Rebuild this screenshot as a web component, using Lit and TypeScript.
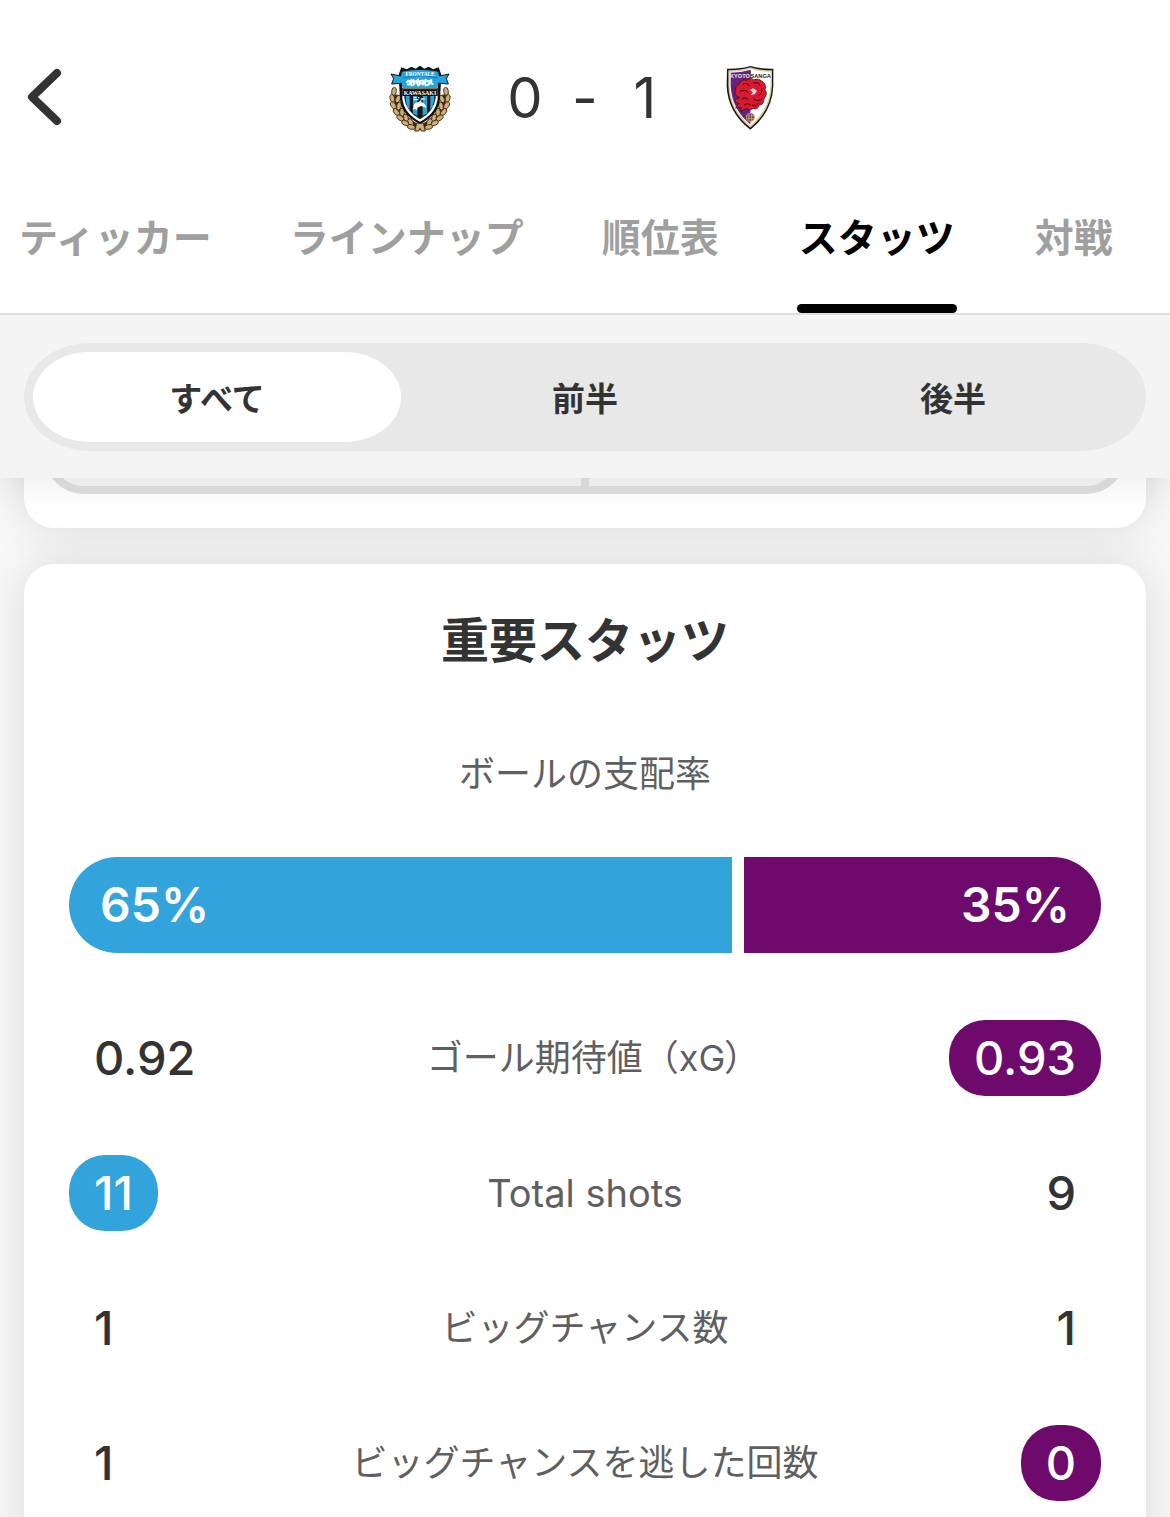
import { LitElement, html, svg, css } from "lit";
import { customElement, property, state } from "lit/decorators.js";
import { classMap } from "lit/directives/class-map.js";
import { styleMap } from "lit/directives/style-map.js";

type Side = "home" | "away";

interface Stat {
  label: string;
  home: string;
  away: string;
  lead?: Side;
}

const TABS = ["ティッカー", "ラインナップ", "順位表", "スタッツ", "対戦"];
const PERIODS = ["すべて", "前半", "後半"];
const POSSESSION = { home: 65, away: 35 };
const STATS: Stat[] = [
  { label: "ゴール期待値（xG）", home: "0.92", away: "0.93", lead: "away" },
  { label: "Total shots", home: "11", away: "9", lead: "home" },
  { label: "ビッグチャンス数", home: "1", away: "1" },
  { label: "ビッグチャンスを逃した回数", home: "1", away: "0", lead: "away" },
];

/* Laurel leaves of the left branch: x, y, rotation. The right branch mirrors them. */
const LEAVES: [number, number, number][] = [
  [42, 110, 8], [37, 131, -14], [54, 133, 26], [40, 152, -30], [57, 154, 12],
  [49, 172, -42], [66, 173, 0], [61, 190, -54], [78, 190, -14],
  [76, 205, -64], [92, 203, -28], [94, 217, -76],
];

@customElement("home-crest")
export class HomeCrest extends LitElement {
  static styles = css`
    :host { display: block; }
    .crest { display: block; width: 62px; height: 67px; }
    .name { font-family: "Liberation Serif", serif; font-weight: 700; }
  `;

  private branch() {
    return LEAVES.map(
      ([x, y, r]) => svg`<ellipse cx=${x} cy=${y} rx="7" ry="12" transform="rotate(${r} ${x} ${y})"
        fill="#cfae78" stroke="#3a2815" stroke-width="2.5"></ellipse>`
    );
  }

  render() {
    return html`
      <svg class="crest" viewBox="27 31 186 201" role="img" aria-label="Kawasaki Frontale">
        <path d="M46 120 Q52 190 120 218 Q188 190 194 120" fill="none" stroke="#3a2815" stroke-width="14" />
        ${this.branch()}
        <g transform="translate(240 0) scale(-1 1)">${this.branch()}</g>
        <path d="M110 205 h20 l6 24 h-12 l-4 -8 l-4 8 h-12z" fill="#cfae78" stroke="#3a2815" stroke-width="3" />
        <path d="M64 38 L80 44 L94 36 L107 42 L120 33 L133 42 L146 36 L160 44 L176 38 L184 60 L180 135 Q174 182 120 208 Q66 182 60 135 L56 60z" fill="#111" />
        <path d="M67 74 H173 V132 Q168 176 120 201 Q72 176 67 132z" fill="#fff" />
        <path d="M73 76 H167 V130 Q162 170 120 194 Q78 170 73 130z" fill="#1a1a1a" />
        <path d="M77 124h12v42l-6-8q-6-14-6-34zM99 124h13v60l-13-8zM128 124h13v52l-13 8zM151 124h12q0 20-6 34l-6 8z" fill="#23a6e0" />
        <path d="M101 129 h8 M114 129 h4 M122 133 h12 M101 135 h14" stroke="#d7f0fa" stroke-width="4" />
        <path d="M100 156 q2 -12 16 -14 l8 -7 l0 8 q14 4 15 18 q-8 -7 -17 -6 q-10 2 -12 12 l-5 -5 l-8 3 l5 -9z" fill="#fff" />
        <path d="M33 58 L62 64 L64 50 Q120 38 176 50 L178 64 L207 58 L199 72 L205 88 L180 86 Q120 74 60 86 L35 88 L41 72z" fill="#23a6e0" stroke="#111" stroke-width="3" />
        <path d="M64 72 Q120 56 176 72 L172 101 H68z" fill="#23a6e0" />
        <path d="M68 70 Q120 56 172 70" fill="none" stroke="#111" stroke-width="1" />
        <path d="M81 82 q6 -8 8 2 q0 8 -6 5 M94 76 v16 M90 82 q8 -2 15 0 M100 76 q8 6 0 15 M108 80 h12 M114 74 q-7 10 1 18 q8 -4 0 -12 M124 78 q10 -3 4 12 M122 86 h12 M137 75 q-4 12 0 17 M142 80 q9 -5 7 4 q-1 8 -9 7 M154 76 q-2 12 4 12" fill="none" stroke="#fff" stroke-width="6" stroke-linecap="round" />
        <path d="M67 100 H173 V124 H67z" fill="#111" />
        <path d="M69 102 H171" stroke="#d9c79c" stroke-width="2" />
        <text class="name" x="120" y="63" text-anchor="middle" font-size="16" fill="#fff">FRONTALE</text>
        <text class="name" x="120" y="122" text-anchor="middle" font-size="18" fill="#fff">KAWASAKI</text>
      </svg>
    `;
  }
}

@customElement("away-crest")
export class AwayCrest extends LitElement {
  static styles = css`
    :host { display: block; }
    .crest { display: block; width: 48px; height: 65px; }
    .name { font-family: "Liberation Sans", sans-serif; font-weight: 700; }
  `;

  render() {
    return html`
      <svg class="crest" viewBox="33 31 144 195" role="img" aria-label="Kyoto Sanga">
        <path d="M36 39 Q76 40 106 31 Q136 40 175 39 V90 Q172 170 106 222 Q38 170 35 90z" fill="#151515" />
        <path d="M40 44 Q76 44 106 35 Q136 44 171 44 V90 Q168 166 106 216 Q42 166 40 90z" fill="#d8c79a" />
        <path d="M44 48 Q78 48 106 39 Q134 48 167 48 V90 Q163 163 106 210 Q47 163 44 90z" fill="#fff" />
        <path d="M47 51 Q78 51 106 42 V206 Q50 160 47 90z" fill="#67227b" />
        <path d="M106 44 v24" stroke="#151515" stroke-width="2" />
        <path d="M72 86 Q78 68 96 74 Q106 62 116 72 Q132 66 143 78 Q157 90 150 102 Q160 116 147 130 Q148 146 132 149 Q128 164 114 158 Q104 168 96 158 L76 168 L80 155 L62 157 L72 143 Q54 140 62 130 L74 126 Q54 118 62 104 Q60 90 72 86z" fill="#d8192f" stroke="#281016" stroke-width="2" />
        <path d="M84 86 q12 -8 18 4 M76 106 q14 -6 22 4 M81 130 q12 -8 18 2 M88 148 q10 -9 18 0 M116 82 q14 -5 20 8 M140 100 q4 12 -8 18 M116 130 q12 10 24 0 M112 148 q12 6 18 -4" fill="none" stroke="#281016" stroke-width="3" stroke-linecap="round" />
        <path d="M104 103 l10 -5 l12 7 l-7 11 l-12 2 l7 -8z" fill="#f3d9d9" />
        <circle cx="106" cy="185" r="12" fill="#67227b" stroke="#c5a052" stroke-width="3" />
        <path d="M94 181 h24 M94 189 h24 M102 174 v22 M110 174 v22" stroke="#c5a052" stroke-width="3" />
        <text class="name" x="75" y="66" text-anchor="middle" font-size="17" fill="#f1e5ee">KYOTO</text>
        <text class="name" x="137" y="66" text-anchor="middle" font-size="17" fill="#2a2024">SANGA</text>
      </svg>
    `;
  }
}

@customElement("stat-table")
export class StatTable extends LitElement {
  @property({ attribute: false }) stats: Stat[] = [];

  static styles = css`
    :host { display: block; }
    .table { width: 100%; border-collapse: collapse; table-layout: fixed; }
    .cell { padding: 30px 0 29px; width: 22%; font-weight: 500; }
    .home-cell { text-align: left; }
    .away-cell { text-align: right; }
    .label {
      padding: 0; font-size: 36px; line-height: 48px; font-weight: 400; color: #5f5f5f;
      text-align: center; white-space: nowrap;
    }
    .label.latin { font-size: 38px; }
    .value {
      display: inline-block; vertical-align: top; padding: 0 25px; border-radius: 36px;
      font-size: 47px; line-height: 76px; color: #333;
    }
    .home-lead { background: #33a3dc; color: #fff; }
    .away-lead { background: #6e0a6b; color: #fff; }
    .trim { font-feature-settings: "palt"; }
  `;

  private label(text: string) {
    return text.endsWith("）") ? html`${text.slice(0, -1)}<span class="trim">）</span>` : text;
  }

  render() {
    return html`
      <table class="table">
        <tbody>
          ${this.stats.map(
            (s) => html`<tr>
              <td class="cell home-cell">
                <span class=${classMap({ value: true, "home-lead": s.lead === "home" })}>${s.home}</span>
              </td>
              <th class=${classMap({ label: true, latin: /^[\x20-\x7e]+$/.test(s.label) })} scope="row">${this.label(s.label)}</th>
              <td class="cell away-cell">
                <span class=${classMap({ value: true, "away-lead": s.lead === "away" })}>${s.away}</span>
              </td>
            </tr>`
          )}
        </tbody>
      </table>
    `;
  }
}

@customElement("app-root")
export class AppRoot extends LitElement {
  @state() private tab = 3;
  @state() private period = 0;

  static styles = css`
    :host {
      display: flex; flex-direction: column; height: 100vh; overflow: hidden;
      background: #f8f8f8; color: #333;
      font-family: Inter, "Noto Sans CJK JP", sans-serif;
    }
    .header { flex: none; position: relative; z-index: 2; background: #fff; border-bottom: 2px solid #dedede; }
    .match {
      display: grid; grid-template-columns: 1fr auto 1fr; align-items: center;
      height: 196px; box-sizing: border-box; padding: 0 24px;
    }
    .button { border: 0; margin: 0; padding: 0; background: none; font: inherit; color: inherit; cursor: pointer; }
    .back { justify-self: start; }
    .back-icon { display: block; width: 40px; height: 60px; }
    .result { display: flex; align-items: center; gap: 39px; }
    .crest-box { display: flex; justify-content: center; width: 72px; }
    .score { display: flex; font-size: 56px; line-height: 64px; }
    .digit { width: 60px; text-align: center; }
    .tabs { display: flex; gap: 78px; padding: 0 19px; overflow: hidden; }
    .tab {
      display: flex; flex-direction: column; flex: none; padding-top: 12px; gap: 36px;
      font-size: 39px; font-weight: 600; line-height: 60px; color: #9f9f9f; white-space: nowrap;
    }
    .tab::after { content: ""; align-self: stretch; height: 9px; border-radius: 5px; }
    .tab.active { min-width: 160px; align-items: center; color: #000; }
    .tab.active::after { background: #000; }
    .filter {
      flex: none; position: relative; z-index: 1; padding: 28px 24px 27px;
      background: #f4f4f4; box-shadow: 0 6px 36px rgba(0, 0, 0, 0.07);
    }
    .segments {
      display: grid; grid-template-columns: repeat(3, 1fr); padding: 9px;
      border-radius: 66px / 54px; background: #e8e8e8;
    }
    .segment { height: 90px; border-radius: 56px / 45px; font-size: 33px; font-weight: 600; }
    .segment.active { background: #fff; }
    .content { flex: 1; min-height: 0; overflow: hidden; display: flex; flex-direction: column; gap: 36px; padding: 0 24px; }
    .card { flex: none; border-radius: 30px; background: #fff; box-shadow: 0 0 48px rgba(0, 0, 0, 0.12); }
    .pitch-card { margin-top: -120px; padding: 40px 21px 34px; }
    .pitch {
      display: flex; justify-content: center; box-sizing: border-box; height: 96px;
      border: 8px solid #dfdfdf; border-top: 0; border-radius: 0 0 38px 38px; background: #f6f6f6;
    }
    .halfway { width: 8px; background: #dfdfdf; }
    .stats-card { padding: 48px 45px 96px; }
    .title { margin: 0; font-size: 48px; font-weight: 700; line-height: 58px; text-align: center; }
    .caption { margin: 80px 0 59px; font-size: 36px; line-height: 48px; color: #5f5f5f; text-align: center; }
    .possession { display: flex; gap: 12px; margin-bottom: 37px; }
    .share { flex-basis: 0; min-width: 0; font-size: 48px; font-weight: 600; line-height: 96px; color: #fff; }
    .share-value { display: block; padding: 0 31px; }
    .share-home { border-radius: 48px 0 0 48px; background: #33a3dc; }
    .share-away { border-radius: 0 48px 48px 0; background: #6e0a6b; text-align: right; }
  `;

  render() {
    return html`
      <header class="header">
        <div class="match">
          <button class="button back" aria-label="戻る">
            <svg class="back-icon" viewBox="0 0 40 60" aria-hidden="true">
              <path d="M33 5 L8 29 L33 53" fill="none" stroke="#333" stroke-width="8" stroke-linecap="round" stroke-linejoin="round" />
            </svg>
          </button>
          <div class="result">
            <div class="crest-box"><home-crest></home-crest></div>
            <div class="score">
              <span class="digit">0</span><span class="digit">-</span><span class="digit">1</span>
            </div>
            <div class="crest-box"><away-crest></away-crest></div>
          </div>
        </div>
        <nav class="tabs">
          ${TABS.map(
            (name, i) => html`<button
              class=${classMap({ button: true, tab: true, active: i === this.tab })}
              @click=${() => (this.tab = i)}
            >${name}</button>`
          )}
        </nav>
      </header>
      <div class="filter">
        <div class="segments">
          ${PERIODS.map(
            (name, i) => html`<button
              class=${classMap({ button: true, segment: true, active: i === this.period })}
              aria-pressed=${i === this.period ? "true" : "false"}
              @click=${() => (this.period = i)}
            >${name}</button>`
          )}
        </div>
      </div>
      <main class="content">
        <section class="card pitch-card">
          <div class="pitch"><div class="halfway"></div></div>
        </section>
        <section class="card stats-card">
          <h2 class="title">重要スタッツ</h2>
          <p class="caption">ボールの支配率</p>
          <div class="possession">
            <div class="share share-home" style=${styleMap({ flexGrow: String(POSSESSION.home) })}>
              <span class="share-value">${POSSESSION.home}%</span>
            </div>
            <div class="share share-away" style=${styleMap({ flexGrow: String(POSSESSION.away) })}>
              <span class="share-value">${POSSESSION.away}%</span>
            </div>
          </div>
          <stat-table .stats=${STATS}></stat-table>
        </section>
      </main>
    `;
  }
}
